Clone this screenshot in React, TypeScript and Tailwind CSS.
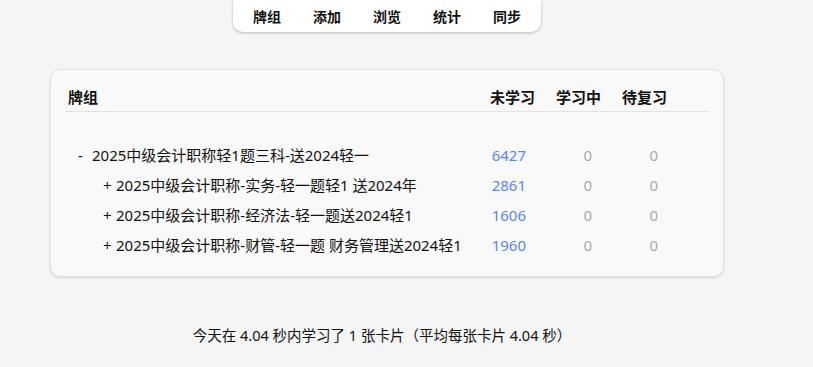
import React from "react";

const font = { fontFamily: '"Noto Sans", "Noto Sans CJK SC", sans-serif' };

const rows = [
  { prefix: "-", name: "2025中级会计职称轻1题三科-送2024轻一", n: "6427", indent: false },
  { prefix: "+", name: "2025中级会计职称-实务-轻一题轻1 送2024年", n: "2861", indent: true },
  { prefix: "+", name: "2025中级会计职称-经济法-轻一题送2024轻1", n: "1606", indent: true },
  { prefix: "+", name: "2025中级会计职称-财管-轻一题 财务管理送2024轻1", n: "1960", indent: true },
];

export default function App() {
  return (
    <div className="w-[813px] h-[367px] bg-[#f5f5f5] text-[#111] overflow-hidden" style={font}>
      <div className="w-[774px] flex flex-col items-center">
        <div className="w-[308px] h-[32px] bg-white rounded-b-[10px] shadow-[0_1px_3px_rgba(0,0,0,0.25)] flex items-center justify-center gap-[32px] text-[14px] font-bold">
          <span>牌组</span>
          <span>添加</span>
          <span>浏览</span>
          <span>统计</span>
          <span>同步</span>
        </div>
        <div className="mt-[37px] w-[674px] bg-[#f9f9f9] border border-[#e3e3e3] rounded-[10px] shadow-[0_1px_2px_rgba(0,0,0,0.15)] px-[14px] pt-[15px] pb-[16px]">
          <div className="grid grid-cols-[1fr_66px_66px_66px_21px] h-[27px] items-center border-b border-[#e2e2e2] text-[15px] font-bold leading-none pb-[2px]">
            <span className="pl-[3px]">牌组</span>
            <span>未学习</span>
            <span>学习中</span>
            <span>待复习</span>
            <span></span>
          </div>
          <div className="h-[28px]"></div>
          {rows.map((r) => (
            <div key={r.name} className="grid grid-cols-[1fr_66px_66px_66px_21px] h-[30px] items-center text-[15px]">
              <span className={r.indent ? "pl-[38px] whitespace-nowrap" : "pl-[13px] whitespace-nowrap"}>
                <span className={r.indent ? "inline-block w-[13px]" : "inline-block w-[14px]"}>{r.prefix}</span>
                {r.name}
              </span>
              <span className="text-right pr-[30px] text-[#5d83f4]">{r.n}</span>
              <span className="text-right pr-[30px] text-[#aaaaaa]">0</span>
              <span className="text-right pr-[30px] text-[#aaaaaa]">0</span>
              <span></span>
            </div>
          ))}
        </div>
        <div className="mt-[48px] ml-[-10px] text-[14.5px] whitespace-nowrap">
          今天在 4.04 秒内学习了 1 张卡片（平均每张卡片 4.04 秒）
        </div>
      </div>
    </div>
  );
}
